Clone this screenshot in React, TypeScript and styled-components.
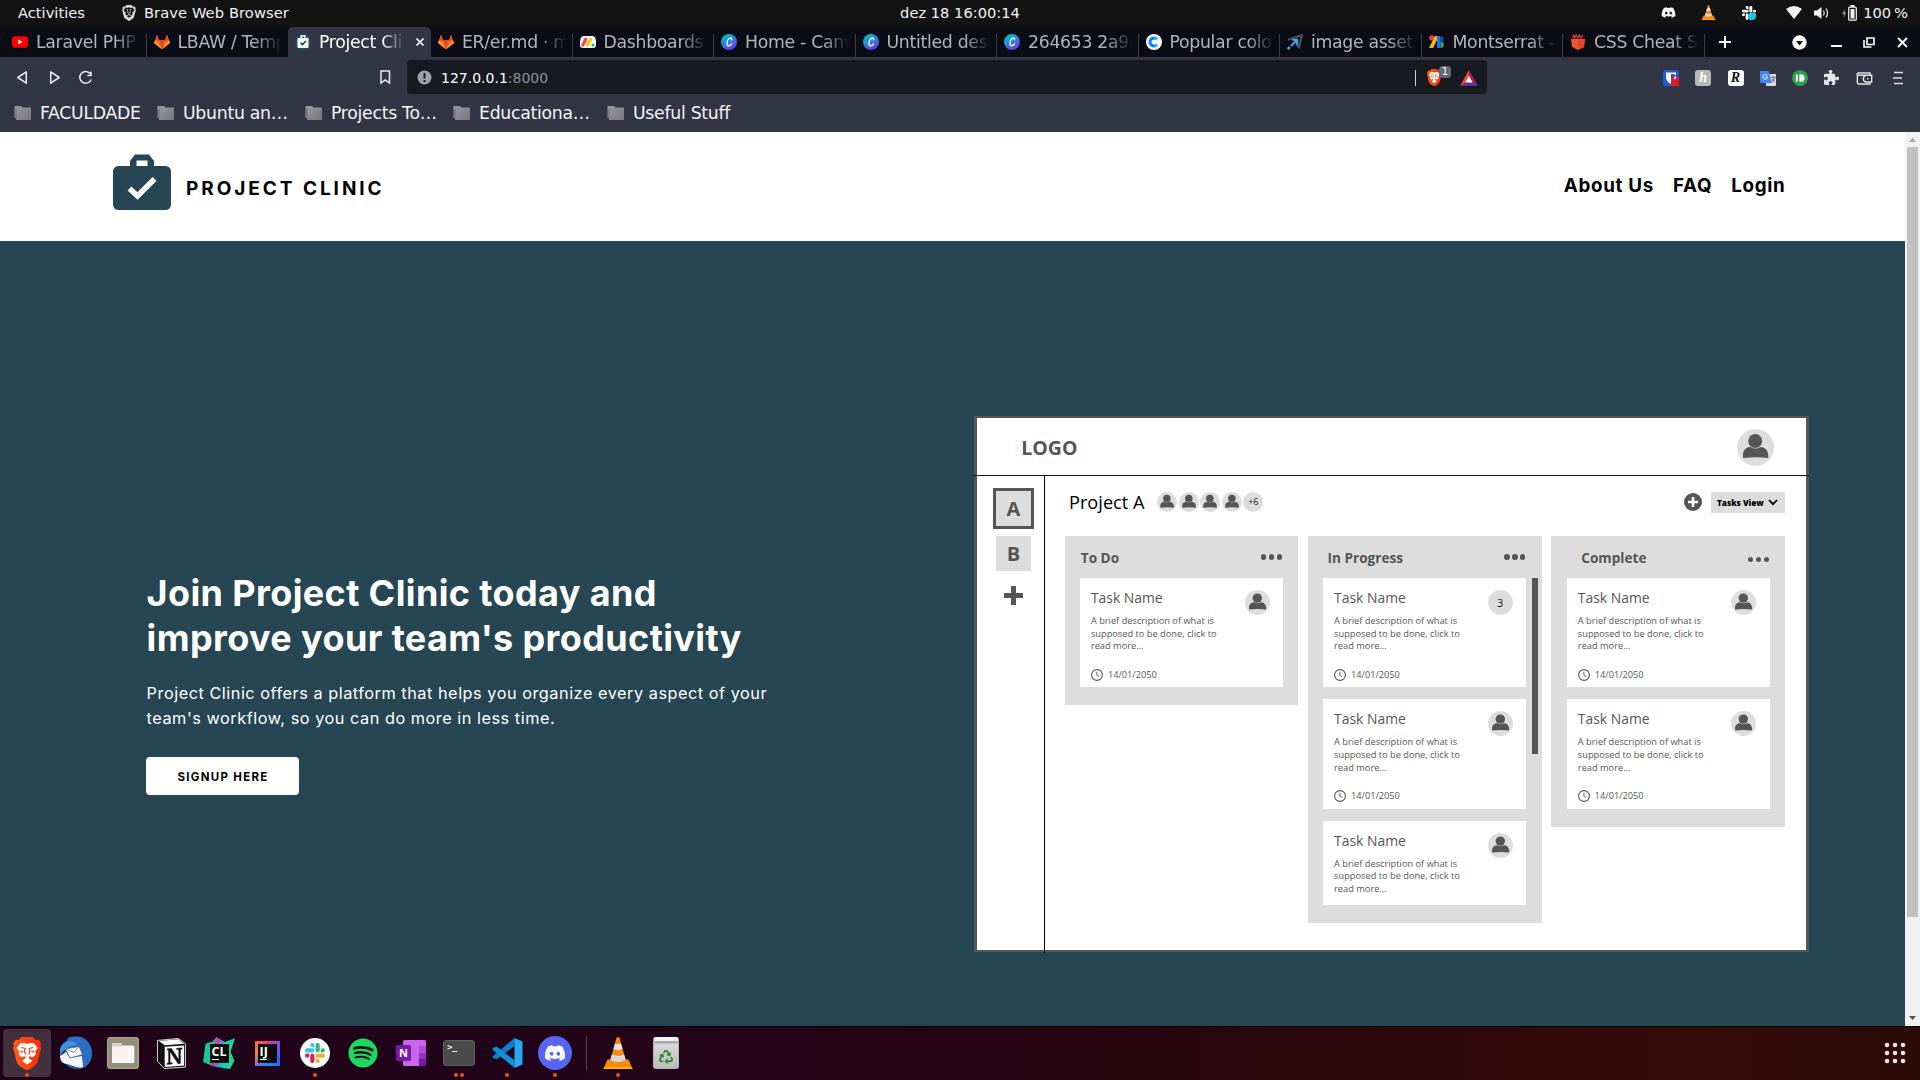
import React from "react";
import styled, { createGlobalStyle, css } from "styled-components";
import { FaBrave, FaDiscord, FaSpotify, FaRecycle, FaPuzzlePiece } from "react-icons/fa6";

const GlobalStyle = createGlobalStyle`
  * { box-sizing: border-box; }
  html, body { margin: 0; padding: 0; overflow: hidden; }
  body { font-family: "DejaVu Sans", sans-serif; }
  h1, p { margin: 0; }
  svg { display: block; flex: none; }
`;

const brandFont = `"Inter", "Liberation Sans", sans-serif`;
const boardFont = `"Open Sans", "Noto Sans", sans-serif`;
const ink = "#555555";
const grey = "#dddddd";
const teal = "#264653";

const Screen = styled.div`
  width: 1920px;
  height: 1080px;
  display: flex;
  flex-direction: column;
  overflow: hidden;
`;

/* ---------- system bar ---------- */
const SystemBar = styled.div`
  height: 27px;
  background: #131313;
  color: #f2f2f2;
  display: grid;
  grid-template-columns: 1fr auto 1fr;
  align-items: center;
  font-size: 14.67px;
  line-height: 25px;
  padding-bottom: 2px;
  white-space: pre;
`;
const SystemLeft = styled.div`
  display: flex;
  align-items: center;
  padding-left: 18px;
`;
const AppLabel = styled.div`
  display: flex;
  align-items: center;
  gap: 7px;
  margin-left: 36px;
  letter-spacing: 0.1px;
`;
const SystemRight = styled.div`
  display: flex;
  align-items: center;
  justify-content: flex-end;
  padding-right: 12px;
`;
const Slot = styled.span<{ $gap?: number }>`
  display: flex;
  margin-left: ${(p) => p.$gap ?? 0}px;
`;

/* ---------- tab strip ---------- */
const TabStrip = styled.div`
  height: 30px;
  background: #0c0c17;
  display: flex;
  padding-left: 5px;
`;
const Tab = styled.div<{ $active?: boolean; $line?: boolean }>`
  width: ${(p) => (p.$active ? 143 : 141.5)}px;
  flex: none;
  display: flex;
  align-items: center;
  padding: 0 6px 0 7px;
  color: ${(p) => (p.$active ? "#ffffff" : "#b4b4b8")};
  background: ${(p) => (p.$active ? "#323544" : "transparent")};
  border-radius: 5px 5px 0 0;
  ${(p) =>
    p.$line &&
    css`
      background: linear-gradient(#3e3e47, #3e3e47) right bottom / 1px 23px no-repeat;
    `}
`;
const TabTitle = styled.span<{ $short?: boolean }>`
  flex: 1;
  min-width: 0;
  margin-left: 8px;
  margin-right: ${(p) => (p.$short ? 8 : -3)}px;
  font-size: 17.3px;
  letter-spacing: -0.3px;
  line-height: 28px;
  white-space: nowrap;
  overflow: hidden;
  mask-image: linear-gradient(90deg, #000 72%, transparent 97%);
`;
const TabActions = styled.div`
  flex: 1;
  display: flex;
  align-items: center;
  padding-left: 13px;
`;

/* ---------- toolbar and bookmarks ---------- */
const Toolbar = styled.div`
  height: 40px;
  background: #323544;
  display: flex;
  align-items: center;
  padding: 1px 13px 0 14px;
`;
const NavButtons = styled.div`
  display: flex;
  align-items: center;
  gap: 14.5px;
  width: 366px;
`;
const AddressBar = styled.div`
  width: 1080px;
  height: 34px;
  margin: -1px 0 0 16px;
  border-radius: 4px;
  background: #171a21;
  display: flex;
  align-items: center;
  padding: 1px 9px 0 10px;
  font-size: 14px;
  color: #ffffff;
`;
const Url = styled.span`
  margin-left: 9px;
  flex: 1;
`;
const Port = styled.span`
  color: #8f9094;
`;
const Divider = styled.div`
  width: 1px;
  height: 16px;
  background: #d0d0d0;
`;
const ShieldBox = styled.div`
  display: flex;
  margin: 0 9px 0 11px;
  position: relative;
  width: 24px;
`;
const CountBadge = styled.span`
  position: absolute;
  left: 12px;
  top: -3px;
  width: 12px;
  height: 12px;
  border-radius: 4px;
  background: #63687a;
  color: #fff;
  font-size: 10px;
  line-height: 12px;
  text-align: center;
`;
const Extensions = styled.div`
  flex: 1;
  display: flex;
  align-items: center;
  justify-content: flex-end;
  gap: 16.3px;
`;
const ExtTile = styled.span<{ $bg: string; $fg: string }>`
  width: 16px;
  height: 16px;
  border-radius: 3px;
  background: ${(p) => p.$bg};
  color: ${(p) => p.$fg};
  font: italic bold 14px/16px "Liberation Serif", serif;
  text-align: center;
`;
const Bookmarks = styled.div`
  height: 35px;
  background: #323544;
  display: flex;
  align-items: flex-start;
  padding: 4px 0 0 14px;
`;
const Bookmark = styled.div<{ $width: number }>`
  width: ${(p) => p.$width}px;
  display: flex;
  align-items: center;
  gap: 8px;
  color: #f4f4f6;
  font-size: 17.3px;
  letter-spacing: -0.28px;
  line-height: 25px;
  white-space: nowrap;
  svg {
    margin-top: -2px;
  }
`;

/* ---------- web page ---------- */
const Viewport = styled.div`
  height: 894px;
  display: flex;
`;
const Page = styled.div`
  width: 1905px;
  display: flex;
  flex-direction: column;
`;
const SiteHeader = styled.header`
  height: 109px;
  background: #ffffff;
  display: flex;
  justify-content: space-between;
  padding: 22px 119.5px 0 112px;
  font-family: ${brandFont};
  color: #000;
`;
const Brand = styled.div`
  display: flex;
  align-items: flex-start;
`;
const BrandName = styled.span`
  margin: 21px 0 0 14px;
  font-size: 19px;
  font-weight: 700;
  line-height: 27px;
  letter-spacing: 2.95px;
  white-space: nowrap;
`;
const SiteNav = styled.nav`
  display: flex;
  gap: 19px;
  padding-top: 18px;
  font-size: 18.8px;
  font-weight: 700;
  line-height: 27px;
  letter-spacing: 0.7px;
`;
const Hero = styled.main`
  flex: 1;
  background: ${teal};
  display: flex;
  align-items: flex-start;
`;
const Pitch = styled.section`
  width: 828px;
  margin: 330px 0 0 146px;
  font-family: ${brandFont};
  color: #ffffff;
`;
const Title = styled.h1`
  font-size: 36px;
  font-weight: 700;
  line-height: 45px;
  letter-spacing: 0.38px;
  padding-left: 0.6px;
  white-space: nowrap;
`;
const Lead = styled.p`
  margin-top: 20px;
  padding-left: 0.6px;
  font-size: 16.3px;
  font-weight: 400;
  line-height: 25px;
  letter-spacing: 0.52px;
  white-space: nowrap;
`;
const SignupButton = styled.button`
  display: block;
  margin: 26px 0 0;
  width: 153px;
  height: 38px;
  padding: 2px 0 0 1px;
  border: 0;
  border-radius: 4px;
  background: #ffffff;
  color: #000;
  font: 700 11.5px/20px ${brandFont};
  letter-spacing: 1.3px;
`;

/* ---------- board preview ---------- */
const Board = styled.section`
  width: 835px;
  height: 536px;
  margin-top: 175px;
  background: #fff;
  border: solid #555;
  border-width: 2.5px 3px;
  color: ${ink};
  font-family: ${boardFont};
  display: flex;
  flex-direction: column;
`;
const BoardTop = styled.div`
  height: 58px;
  margin: 0 -3px;
  border-bottom: 1px solid #111;
  display: flex;
  align-items: center;
  justify-content: space-between;
  padding: 2px 35px 0 47.3px;
  flex: none;
`;
const BoardLogo = styled.span`
  font-size: 19.5px;
  font-weight: 700;
`;
const BoardBody = styled.div`
  flex: 1;
  display: flex;
  margin-bottom: -3px;
`;
const Rail = styled.div`
  width: 68px;
  border-right: 1px solid #000;
  display: flex;
  flex-direction: column;
  align-items: center;
  padding: 12px 0 0 6px;
`;
const RailTile = styled.div<{ $active?: boolean }>`
  width: ${(p) => (p.$active ? 41 : 35)}px;
  height: ${(p) => (p.$active ? 41 : 35)}px;
  margin-bottom: ${(p) => (p.$active ? 7 : 15)}px;
  background: ${grey};
  border: ${(p) => (p.$active ? `3px solid ${ink}` : "0")};
  font-size: 20px;
  font-weight: 700;
  line-height: 35px;
  text-align: center;
`;
const Workspace = styled.div`
  flex: 1;
  padding-left: 20px;
`;
const ProjectBar = styled.div`
  height: 60px;
  width: 720px;
  display: flex;
  align-items: flex-start;
  padding: 16px 0 0 4px;
`;
const ProjectName = styled.span`
  width: 88px;
  color: #000;
  font-size: 18.2px;
  line-height: 21px;
  white-space: nowrap;
`;
const Members = styled.div`
  display: flex;
  flex: 1;
  gap: 1.6px;
`;
const Bubble = styled.span<{ $size: number; $font: number }>`
  width: ${(p) => p.$size}px;
  height: ${(p) => p.$size}px;
  line-height: ${(p) => p.$size}px;
  font-size: ${(p) => p.$font}px;
  border-radius: 50%;
  background: ${grey};
  color: #111;
  text-align: center;
  flex: none;
`;
const ViewSelect = styled.div`
  width: 74px;
  height: 20.5px;
  margin-left: 9px;
  padding: 0 7px 0 6px;
  background: ${grey};
  color: #000;
  font-size: 8.2px;
  font-weight: 800;
  display: flex;
  align-items: center;
  justify-content: space-between;
  white-space: nowrap;
`;
const Columns = styled.div`
  display: flex;
  align-items: flex-start;
  gap: 9.8px;
`;
const Column = styled.div<{ $height: number; $inset?: number }>`
  width: 233.4px;
  height: ${(p) => p.$height}px;
  background: ${grey};
  padding-left: ${(p) => p.$inset ?? 15.3}px;
`;
const ColumnHead = styled.div<{ $indent: number }>`
  width: 203px;
  height: 42.2px;
  padding: 0 1px 0 ${(p) => p.$indent}px;
  display: flex;
  align-items: center;
  justify-content: space-between;
  font-size: 13.6px;
  font-weight: 700;
`;
const MenuDots = styled.span<{ $drop?: number }>`
  display: flex;
  gap: 2.6px;
  padding-top: ${(p) => p.$drop ?? 0}px;
  &::before,
  &::after {
    content: "";
  }
  &::before,
  &::after,
  i {
    width: 5.4px;
    height: 5.4px;
    border-radius: 50%;
    background: ${ink};
  }
`;
const ColumnBody = styled.div`
  display: flex;
  gap: 6px;
`;
const Stack = styled.div`
  display: flex;
  flex-direction: column;
  gap: 12px;
`;
const ScrollTrack = styled.div`
  width: 6px;
  height: 176px;
  background: ${ink};
`;
const Card = styled.article<{ $height: number }>`
  width: 202.6px;
  height: ${(p) => p.$height}px;
  background: #fff;
  padding: 10px 13.4px 0 10.6px;
  display: flex;
  justify-content: space-between;
`;
const CardBody = styled.div`
  display: flex;
  flex-direction: column;
  white-space: pre;
`;
const CardTitle = styled.span`
  font-size: 13.9px;
  line-height: 20px;
`;
const CardText = styled.p`
  margin-top: 7px;
  font-size: 9.25px;
  line-height: 12.6px;
`;
const CardDate = styled.span`
  margin-top: 14.8px;
  display: flex;
  align-items: center;
  gap: 5px;
  font-size: 9.2px;
  line-height: 14px;
`;
const CardOwner = styled.div`
  padding-top: 2px;
`;

/* ---------- page scrollbar ---------- */
const Scrollbar = styled.div`
  width: 15px;
  background: #f1f1f1;
  display: flex;
  flex-direction: column;
  align-items: center;
`;
const Thumb = styled.div`
  width: 11px;
  height: 770px;
  background: #c1c1c1;
  margin-bottom: auto;
`;

/* ---------- dock ---------- */
const Dock = styled.footer`
  height: 54px;
  border-top: 1px solid #0a0307;
  background: linear-gradient(90deg, #1f0419 0%, #22041a 28%, #29050f 60%, #350b07 88%, #2c0a08 100%);
  display: flex;
  align-items: center;
  padding: 0 9px 1px 3px;
`;
const DockItem = styled.div<{ $active?: boolean }>`
  width: 48px;
  height: 48px;
  border-radius: 4px;
  background: ${(p) => (p.$active ? "#43303f" : "transparent")};
  display: flex;
  align-items: center;
  justify-content: center;
  position: relative;
  flex: none;
`;
const Running = styled.span`
  position: absolute;
  left: 0;
  right: 0;
  bottom: 0;
  display: flex;
  justify-content: center;
  gap: 2.5px;
  i {
    width: 4px;
    height: 4px;
    border-radius: 50%;
    background: #e95420;
  }
`;
const DockLine = styled.div`
  width: 1px;
  height: 34px;
  margin: 0 7px;
  background: #5a4350;
`;
const DockSpacer = styled.div`
  flex: 1;
`;
const RoundLogo = styled.span<{ $bg: string; $size: number; $fg?: string }>`
  width: ${(p) => p.$size}px;
  height: ${(p) => p.$size}px;
  border-radius: 50%;
  background: ${(p) => p.$bg};
  color: ${(p) => p.$fg ?? "#fff"};
  display: flex;
  align-items: center;
  justify-content: center;
`;

/* ---------- icons ---------- */
const Person = ({ size }: { size: number }) => (
  <svg width={size} height={size} viewBox="0 0 37 37">
    <circle cx="18.5" cy="18.5" r="18.5" fill={grey} />
    <circle cx="18.2" cy="12" r="7" fill={ink} />
    <path d="M6 29 V25.5 C6 20.5 10 18 13.5 18 Q18.5 21 23.5 18 C27.5 18 31.2 21 31.2 26 V29 Q18.5 27.6 6 29Z" fill={ink} />
  </svg>
);
const ClockIcon = () => (
  <svg width="12" height="12" viewBox="0 0 12 12" fill="none" stroke={ink}>
    <circle cx="6" cy="6" r="5.4" strokeWidth="1.1" />
    <path d="M5.9 2.8V6.3L8.2 7.6" strokeWidth="0.9" />
  </svg>
);
const Folder = () => (
  <svg width="18" height="14" viewBox="0 0 18 14">
    <defs>
      <linearGradient id="fold" x1="0" y1="0" x2="1" y2="1">
        <stop offset="0" stopColor="#9a9aa2" />
        <stop offset="1" stopColor="#77777a" />
      </linearGradient>
    </defs>
    <path d="M1 0H7L8.5 1.5H17V14H2V12H0.5V1Z" fill="url(#fold)" />
    <path d="M2 3V13" stroke="#55555e" strokeWidth=".6" />
  </svg>
);
const YoutubeMark = () => (
  <svg width="16" height="16" viewBox="0 0 16 16">
    <rect x="0" y="2.2" width="16" height="11.6" rx="3" fill="#ff0000" />
    <path d="M6.3 5.5L10.6 8L6.3 10.5Z" fill="#fff" />
  </svg>
);
const GitlabMark = () => (
  <svg width="16" height="16" viewBox="0 0 16 16">
    <path d="M0 9L3 .8L5.2 6.2H10.8L13 .8L16 9L8 15.2Z" fill="#fc6d26" />
    <path d="M5.2 6.2H10.8L8 15.2Z" fill="#e24329" />
    <path d="M0 9L1.1 6.2L8 15.2ZM16 9L14.9 6.2L8 15.2Z" fill="#fca326" />
    <path d="M3 .8L5.2 6.2H1ZM13 .8L10.8 6.2H15Z" fill="#e24329" />
  </svg>
);
const Cone = ({ size }: { size: number }) => (
  <svg width={size} height={size} viewBox="0 0 32 32">
    <path d="M5.5 22.5H26.5L30.5 32H1.5Z" fill="#f78c00" />
    <path d="M1.9 30.5H30.1L30.5 32H1.5Z" fill="#ffb330" />
    <path d="M14.6 0.5Q16 -.5 17.4 .5L24.5 26Q16 31 7.5 26Z" fill="#f58a0c" />
    <path d="M13 6.5Q16 7.7 19 6.5L20.6 12Q16 14 11.4 12Z" fill="#e4e4e4" />
    <path d="M9.8 17.6Q16 20.4 22.2 17.6L23.7 23Q16 27 8.3 23Z" fill="#dadada" />
  </svg>
);
const SlackMark = ({ size, mono }: { size: number; mono?: boolean }) => {
  const c = mono ? ["#fff", "#fff", "#fff", "#fff"] : ["#36c5f0", "#2eb67d", "#ecb22e", "#e01e5a"];
  return (
    <svg width={size} height={size} viewBox="0 0 24 24">
      {c.map((fill, i) => (
        <g key={i} fill={fill} transform={`rotate(${i * 90} 12 12)`}>
          <rect x="0" y="6.3" width="11.3" height="5" rx="2.5" />
          <path d="M11.3 5H8.8A2.5 2.5 0 1 1 11.3 2.5Z" />
        </g>
      ))}
      {mono && <circle cx="17.5" cy="17.5" r="6.5" fill="#12c8ee" />}
    </svg>
  );
};
const ClinicMark = () => (
  <svg width="60" height="57" viewBox="0 0 60 57">
    <path d="M18 13V7L23 .5H37L42 7V13" fill={teal} />
    <path d="M24.5 6.5H35.5V12.5H24.5Z" fill="#fff" />
    <rect x="1" y="12" width="58" height="44" rx="5.5" fill={teal} />
    <path d="M17.5 34.5L25.5 42L42.5 25" fill="none" stroke="#fff" strokeWidth="5.4" />
  </svg>
);
const ClinicFavicon = () => (
  <svg width="16" height="16" viewBox="0 0 16 16">
    <circle cx="8" cy="8" r="8" fill="#244e5c" />
    <path d="M6 4V2H10V4" fill="none" stroke="#fff" strokeWidth="1.3" />
    <rect x="2.5" y="4" width="11" height="10" rx="1.2" fill="#fff" />
    <path d="M5.5 8.8L7.4 10.7L10.8 7" fill="none" stroke="#17333d" strokeWidth="1.5" />
  </svg>
);
const MondayMark = () => (
  <svg width="16" height="16" viewBox="0 0 16 16">
    <path d="M4 2H12C15 2 16 5 16 8V11C16 13 15 14 13 14H3C1 14 0 13 0 11V9C0 5 1 2 4 2Z" fill="#fff" />
    <g strokeWidth="3.2" strokeLinecap="round">
      <path d="M2.8 11L5.8 5.2" stroke="#ff3d57" />
      <path d="M7.5 11L10.5 5.2" stroke="#ffcb00" />
      <path d="M13 11V11.1" stroke="#00ca72" />
    </g>
  </svg>
);
const CanvaMark = ({ id }: { id: string }) => (
  <svg width="16" height="16" viewBox="0 0 16 16">
    <defs>
      <linearGradient id={id} x1="0.2" y1="0" x2="0.8" y2="1">
        <stop offset="0" stopColor="#00c4cc" />
        <stop offset=".5" stopColor="#2f80d8" />
        <stop offset="1" stopColor="#7d2ae8" />
      </linearGradient>
    </defs>
    <circle cx="8" cy="8" r="8" fill={`url(#${id})`} />
    <path d="M10.6 5.8C11 4 9.3 3.4 7.8 4.8C5.8 6.6 5 11.6 7.6 11.8C9 11.9 10 10.9 10.5 9.8" fill="none" stroke="#fff" strokeWidth="1.3" strokeLinecap="round" />
  </svg>
);
const CoolorsMark = () => (
  <svg width="16" height="16" viewBox="0 0 16 16">
    <circle cx="8" cy="8" r="8" fill="#fff" />
    <path d="M10.9 5.2A4 4 0 1 0 10.9 10.8" fill="none" stroke="#0a7cff" strokeWidth="3" />
    <path d="M10.9 5.2A4 4 0 0 0 8.5 4M8.5 12A4 4 0 0 0 10.9 10.8" fill="none" stroke="#35b7ff" strokeWidth="3" />
  </svg>
);
const PlaneMark = () => (
  <svg width="16" height="16" viewBox="0 0 16 16">
    <path d="M1 5.8L14.8 1.2L12 13L9.2 10.2" fill="none" stroke="#4c5054" strokeWidth="2.2" />
    <path d="M.8 15.2L2.8 12.9" stroke="#45a6f0" strokeWidth="2.4" />
    <path d="M4 12L9.5 6.5M5.2 5.8H10.2V10.8" fill="none" stroke="#45a6f0" strokeWidth="2" />
  </svg>
);
const FontsMark = () => (
  <svg width="16" height="14" viewBox="0 0 16 14">
    <circle cx="3" cy="3" r="2.8" fill="#ea4335" />
    <path d="M6 1H10L4 13H0Z" fill="#fbbc04" />
    <path d="M8 1H11.5V13H8Z" fill="#1a73e8" />
    <path d="M11.5 1A3 3 0 0 1 11.5 7Z" fill="#0d4fb0" />
    <path d="M11.5 6.5A3.2 3.2 0 0 1 11.5 13Z" fill="#34a853" />
  </svg>
);
const CheatMark = () => (
  <svg width="16" height="16" viewBox="0 0 16 16">
    <path d="M1 5H15L14 13L8 16L2 13Z" fill="#f2552c" />
    <path d="M8 5H15L14 13L8 16Z" fill="#e34a22" />
    <path d="M2.5 4L3.5 1.5L4.5 4L6 1L8 4L9.5 1L11 4L13 .8" fill="none" stroke="#c8402a" strokeWidth="1.3" />
  </svg>
);

const ChromeGlyph = ({ d }: { d: string }) => (
  <svg width="17" height="17" viewBox="0 0 18 18" fill="none" stroke="#ececf0" strokeWidth="1.6" strokeLinejoin="round">
    <path d={d} />
  </svg>
);

const tabs = [
  { title: "Laravel PHP", icon: <YoutubeMark />, line: true },
  { title: "LBAW / Temp", icon: <GitlabMark /> },
  { title: "Project Cli", icon: <ClinicFavicon />, active: true },
  { title: "ER/er.md · m", icon: <GitlabMark />, line: true },
  { title: "Dashboards", icon: <MondayMark />, line: true },
  { title: "Home - Canv", icon: <CanvaMark id="cv1" />, line: true },
  { title: "Untitled desi", icon: <CanvaMark id="cv2" />, line: true },
  { title: "264653 2a9d", icon: <CanvaMark id="cv3" />, line: true },
  { title: "Popular colo", icon: <CoolorsMark />, line: true },
  { title: "image asset", icon: <PlaneMark />, line: true },
  { title: "Montserrat -", icon: <FontsMark />, line: true },
  { title: "CSS Cheat S", icon: <CheatMark />, line: true },
];

const bookmarks = [
  { label: "FACULDADE", width: 143 },
  { label: "Ubuntu an…", width: 148 },
  { label: "Projects To…", width: 148 },
  { label: "Educationa…", width: 154 },
  { label: "Useful Stuff", width: 150 },
];

const TaskCard = ({ height = 109.2, count, dated = true }: { height?: number; count?: number; dated?: boolean }) => (
  <Card $height={height}>
    <CardBody>
      <CardTitle>Task Name</CardTitle>
      <CardText>{"A brief description of what is\nsupposed to be done, click to\nread more..."}</CardText>
      {dated && (
        <CardDate>
          <ClockIcon />
          14/01/2050
        </CardDate>
      )}
    </CardBody>
    <CardOwner>
      {count ? (
        <Bubble as="div" $size={25} $font={11}>
          {count}
        </Bubble>
      ) : (
        <Person size={25} />
      )}
    </CardOwner>
  </Card>
);

const Dots = ({ drop }: { drop?: number }) => (
  <MenuDots $drop={drop}>
    <i />
  </MenuDots>
);

const BraveLion = ({ size }: { size: number }) => (
  <svg width={size * 0.86} height={size} viewBox="0 0 28 33">
    <defs>
      <linearGradient id="lion" x1="0" y1="0" x2="1" y2="0">
        <stop offset="0" stopColor="#ff5a1e" />
        <stop offset="1" stopColor="#ff2a00" />
      </linearGradient>
    </defs>
    <path d="M8.5 0H19.5L22.5 3L25.5 2.8L28 6.5L27.3 9L28 11L24.3 25.5C23.5 28.5 17 32 14 33.5C11 32 4.5 28.5 3.7 25.5L0 11L.7 9L0 6.5L2.5 2.8L5.5 3Z" fill="url(#lion)" />
    <path d="M14 6.8L18 6L21 6.5L24.5 11L22 14.5L22.7 17L20 20.2L16.5 19.3L15.2 21L19.2 23.8L14 27.8L8.8 23.8L12.8 21L11.5 19.3L8 20.2L5.3 17L6 14.5L3.5 11L7 6.5L10 6Z" fill="#fff" />
    <path d="M8 10.5L12 11.5L11.2 14L12.3 17.5M20 10.5L16 11.5L16.8 14L15.7 17.5" fill="none" stroke="#ff4010" strokeWidth="1.2" />
    <path d="M6.8 13L10.5 14.8L8 16ZM21.2 13L17.5 14.8L20 16Z" fill="#ff4010" />
  </svg>
);

const NotionCube = () => (
  <svg width="31" height="33" viewBox="0 0 32 34">
    <path d="M1.5 3.5L23 1.5L30.5 7V31L8.5 32.5L1.5 25Z" fill="#111" stroke="#ddd" strokeWidth="1" />
    <path d="M3 4L23 2.3L29 7L9 8.5Z" fill="#fff" />
    <path d="M9 10L29 8.7V29.5L9 31Z" fill="#fff" />
    <path d="M11.5 12.2L16 11.9L23.5 23.5V13.2L21.3 12.7V11.6L27 11.2V12.3L25.2 13V27.3L22.8 27.7L14.5 15V26.3L16.8 26.8V27.9L11.3 28.3V27.2L13 26.5V13.8L11.5 13.2Z" fill="#111" stroke="#111" strokeWidth=".5" />
  </svg>
);
const Thunderbird = () => (
  <svg width="35" height="34" viewBox="0 0 35 34">
    <path d="M15 2C24 -3 34.5 6 34 18C33.5 28 26 34 17 33C10 32.5 6 27 5 22L8 8Z" fill="#2059a8" />
    <path d="M11 1.5C24 -3 35 8 34 19C33 29 25 33.5 20 32.5C27 26 27 15 20 9L9 8C8 5 9 3 11 1.5Z" fill="#2a6fc4" />
    <path d="M2 13C4 7 8 4 14 5C17 6 19 7 20 9L8 12L2 20Z" fill="#3f8fe0" />
    <path d="M2 20L8 16L12 22L24 20L25 31C19 33 14 29 9 28C5 28 2 25 2 20Z" fill="#f5f7fb" />
    <path d="M7.5 13L21 10.5L24.5 18.5L12 22Z" fill="#fff" stroke="#6c7684" strokeWidth=".9" />
    <path d="M7.5 13L16 16.5L21 10.5" fill="none" stroke="#6c7684" strokeWidth=".9" />
  </svg>
);
const FilesIcon = () => (
  <svg width="32" height="32" viewBox="0 0 32 32">
    <rect width="32" height="32" rx="3.5" fill="#b0aa99" />
    <rect x="1" y="1" width="30" height="30" rx="3" fill="#958f7e" />
    <path d="M5 7Q5 6 6 6H14L15.5 8.5H26Q27.3 8.5 27.3 10V24.5Q27.3 26 26 26H6.3Q5 26 5 24.5Z" fill="#f7f5f2" />
    <path d="M5 7Q5 6 6 6H14L15.5 8.5V9.8H5Z" fill="#d9d4c8" />
  </svg>
);
const IdeText = styled.span`
  display: flex;
  flex-direction: column;
  align-items: flex-start;
  width: 19px;
  height: 19px;
  padding: 3px 0 0 2px;
  background: #0a0a0a;
  color: #fff;
  font: bold 12.5px/9px "Open Sans", sans-serif;
  &::after {
    content: "";
    width: 7px;
    height: 1.5px;
    margin-top: 3px;
    background: #fff;
    flex: none;
  }
`;
const IdeFrame = styled.span<{ $kind: "clion" | "idea" }>`
  display: flex;
  align-items: center;
  justify-content: center;
  ${(p) =>
    p.$kind === "clion"
      ? css`
          width: 32px;
          height: 32px;
          background: linear-gradient(100deg, #16c79a 0 30%, #e8388a 38%, #8a5fc8 46%, #13c8b8 60%, #1fe08c);
          clip-path: polygon(8% 20%, 30% 14%, 42% 0, 68% 16%, 100% 4%, 86% 46%, 98% 74%, 84% 100%, 34% 92%, 0 78%);
        `
      : css`
          width: 25px;
          height: 25px;
          background: conic-gradient(from 0deg, #e8388a, #7b52d8 15%, #1b6cff 35%, #1b8cff 50%, #8a6cc0 62%, #f08a2a 75%, #fc3a6b);
        `}
`;
const OneNote = styled.span`
  width: 23.4px;
  height: 26px;
  margin-left: 7px;
  border-radius: 1.5px;
  background: linear-gradient(90deg, #ca64ea 0 70%, transparent 70%),
    linear-gradient(#ca64ea 0 25%, #ae4bd5 25% 50%, #9332bf 50% 75%, #7719aa 75%);
`;
const NoteTile = styled.span`
  display: block;
  width: 15.5px;
  height: 15.5px;
  margin: 5px 0 0 -7px;
  border-radius: 1.5px;
  background: #7719aa;
  color: #fff;
  font: bold 11px/15px "Open Sans", sans-serif;
  text-align: center;
`;
const TerminalTile = styled.span`
  width: 32px;
  height: 26px;
  border-radius: 3px;
  border: 1px solid #5f5f5f;
  background: #4a4a4a;
  color: #f5f5f5;
  font: bold 9px/12px "DejaVu Sans Mono", monospace;
  padding: 0 0 0 3px;
  letter-spacing: -0.4px;
`;
const VsCode = () => (
  <svg width="31" height="30" viewBox="0 0 31 30">
    <path d="M22.5 0V8L4.5 21.5L1 20Q0 19 1 18Z" fill="#0c7ec8" />
    <path d="M22.5 30V22L4.5 8.5L1 10Q0 11 1 12Z" fill="#0e90dc" />
    <path d="M22.5 0L30.5 3.5V26.5L22.5 30Z" fill="#2aa6f2" />
  </svg>
);
const TrashIcon = styled.span`
  width: 26px;
  height: 32px;
  border-radius: 3px;
  border: 1px solid #b5b5b5;
  border-top: 4px solid #f2f2f2;
  background: linear-gradient(#a9a9a9 0 2px, #d8d8d8 3px, #bcbcbc);
  color: #2f8a26;
  display: flex;
  align-items: center;
  justify-content: center;
  padding-top: 5px;
`;

export default function App() {
  return (
    <Screen>
      <GlobalStyle />
      <SystemBar>
        <SystemLeft>
          Activities
          <AppLabel>
            <FaBrave size={16} color="#d9d9d9" />
            Brave Web Browser
          </AppLabel>
        </SystemLeft>
        <span>dez 18 16:00:14</span>
        <SystemRight>
          <FaDiscord size={15} />
          <Slot $gap={25}><Cone size={15} /></Slot>
          <Slot $gap={26}><SlackMark size={14} mono /></Slot>
          <Slot $gap={30}>
            <svg width="16" height="13" viewBox="0 0 16 13"><path d="M0 3Q8 -3 16 3L8 13Z" fill="#f2f2f2" /></svg>
          </Slot>
          <Slot $gap={12}>
            <svg width="16" height="14" viewBox="0 0 16 14" fill="none" stroke="#f2f2f2">
              <path d="M0 4.5H3L7.5 1V13L3 9.5H0Z" fill="#f2f2f2" stroke="none" />
              <path d="M9.5 4.5Q11 7 9.5 9.5M12 2.5Q15 7 12 11.5" strokeWidth="1.2" />
            </svg>
          </Slot>
          <Slot $gap={12}>
            <svg width="15" height="16" viewBox="0 0 15 16">
              <path d="M3 4L0 9H2L1.5 13L4 7.5H2.5Z" fill="#999" />
              <rect x="6.7" y="2.2" width="7.6" height="13" rx="1" fill="none" stroke="#f2f2f2" strokeWidth="1.2" />
              <rect x="8.5" y="4" width="4" height="9.5" fill="#f2f2f2" />
              <rect x="8.5" y="0" width="4" height="2" fill="#f2f2f2" />
            </svg>
          </Slot>
          <Slot $gap={6}>{"100\u202f%"}</Slot>
        </SystemRight>
      </SystemBar>

      <TabStrip>
        {tabs.map((t) => (
          <Tab key={t.title} $active={t.active} $line={t.line}>
            {t.icon}
            <TabTitle $short={t.active}>{t.title}</TabTitle>
            {t.active && (
              <svg width="10" height="10" viewBox="0 0 10 10" stroke="#fff" strokeWidth="1.7"><path d="M1.5 1.5L8.5 8.5M8.5 1.5L1.5 8.5" /></svg>
            )}
          </Tab>
        ))}
        <TabActions>
          <svg width="14" height="14" viewBox="0 0 14 14" stroke="#fff" strokeWidth="2"><path d="M1 7H13M7 1V13" /></svg>
          <Slot $gap={60}>
            <svg width="15" height="15" viewBox="0 0 15 15"><circle cx="7.5" cy="7.5" r="7.2" fill="#fff" /><path d="M4 6H11L7.5 10.5Z" fill="#0c0c17" /></svg>
          </Slot>
          <Slot $gap={24}>
            <svg width="11" height="10" viewBox="0 0 11 10"><rect y="8" width="11" height="2" fill="#fff" /></svg>
          </Slot>
          <Slot $gap={21}>
            <svg width="12" height="11" viewBox="0 0 12 11" fill="none" stroke="#fff" strokeWidth="1.6"><path d="M4 1H11V7.5H4ZM1 3V10H8.5" /></svg>
          </Slot>
          <Slot $gap={22}>
            <svg width="11" height="11" viewBox="0 0 11 11" stroke="#fff" strokeWidth="1.9"><path d="M1 1L10 10M10 1L1 10" /></svg>
          </Slot>
        </TabActions>
      </TabStrip>

      <Toolbar>
        <NavButtons>
          <ChromeGlyph d="M13 3V15L4 9Z" />
          <ChromeGlyph d="M5 3V15L14 9Z" />
          <ChromeGlyph d="M14 5A6.2 6.2 0 1 0 15 11M14.8 3V7H11" />
        </NavButtons>
        <svg width="11" height="15" viewBox="0 0 11 15" fill="none" stroke="#ececf0" strokeWidth="1.5"><path d="M1 1H9.5V13L5.2 10L1 13Z" /></svg>
        <AddressBar>
          <svg width="15" height="15" viewBox="0 0 15 15"><circle cx="7.5" cy="7.5" r="7" fill="#9ea1a8" /><path d="M7.5 3V8.5M7.5 10V12" stroke="#171a21" strokeWidth="2" /></svg>
          <Url>127.0.0.1<Port>:8000</Port></Url>
          <Divider />
          <ShieldBox>
            <BraveLion size={17} />
            <CountBadge>1</CountBadge>
          </ShieldBox>
          <svg width="18" height="16" viewBox="0 0 18 16"><path d="M9 0L0 16L9 11Z" fill="#ff4724" /><path d="M9 0L18 16L9 11Z" fill="#9e1f63" /><path d="M0 16H18L9 10Z" fill="#662d91" /><path d="M9 6L5.3 12.6H12.7Z" fill="#fff" /></svg>
        </AddressBar>
        <Extensions>
          <svg width="16" height="16" viewBox="0 0 16 16"><rect width="16" height="16" rx="2" fill="#175ddc" /><path d="M3 2.5H13V8C13 11 8 14 8 14S3 11 3 8Z" fill="#fff" /><path d="M8 4H11.5V8L8 11.5Z" fill="#175ddc" /><rect x="8" y="9" width="8" height="7" fill="#e01b24" /><path d="M10 9V7.5A2 2 0 0 1 14 7.5V9" fill="none" stroke="#e01b24" strokeWidth="1.4" /></svg>
          <ExtTile $bg="#b9b9b9" $fg="#fff">h</ExtTile>
          <ExtTile $bg="#fff" $fg="#111">R</ExtTile>
          <svg width="16" height="16" viewBox="0 0 16 16"><rect x="6" y="4" width="10" height="12" rx="1" fill="#d5d8dc" /><path d="M0 1H8.5L12 13H1Q0 13 0 12Z" fill="#4285f4" /><path d="M7.2 5.5A2.3 2.3 0 1 0 7.6 7.2H5.5" fill="none" stroke="#fff" strokeWidth="1" /><path d="M11 7.5H15.5M13.2 6.3V7.5M14.8 7.5Q14 10 11.8 11.5M12 9L14.8 12" fill="none" stroke="#5f6368" strokeWidth=".9" /></svg>
          <svg width="16" height="16" viewBox="0 0 16 16"><circle cx="8" cy="8" r="8" fill="#2aa04a" /><path d="M4.8 4.5V11.5" stroke="#fff" strokeWidth="2" /><path d="M8.2 5.2H9A2.8 2.8 0 0 1 9 10.8H8.2Z" fill="#fff" stroke="#fff" strokeWidth="1.7" /></svg>
          <FaPuzzlePiece size={15} color="#e6e6ea" />
          <svg width="17" height="14" viewBox="0 0 17 14" fill="none" stroke="#e0e0e6" strokeWidth="1.4"><path d="M14 4V2H2.5A1.3 1.3 0 0 0 1.3 4V11.5Q1.3 13 3 13H14V11M2 4.3H15.7V11H10A3.3 3.3 0 0 1 10 4.5M11 7.7H12.5" /></svg>
          <svg width="18" height="14" viewBox="0 0 18 14" stroke="#e0e0e6" strokeWidth="1.6"><path d="M5 1.5H14M4 7H13M5 12.5H14" /></svg>
        </Extensions>
      </Toolbar>

      <Bookmarks>
        {bookmarks.map((b) => (
          <Bookmark key={b.label} $width={b.width}>
            <Folder />
            {b.label}
          </Bookmark>
        ))}
      </Bookmarks>

      <Viewport>
        <Page>
          <SiteHeader>
            <Brand>
              <ClinicMark />
              <BrandName>PROJECT CLINIC</BrandName>
            </Brand>
            <SiteNav>
              <span>About Us</span>
              <span>FAQ</span>
              <span>Login</span>
            </SiteNav>
          </SiteHeader>
          <Hero>
            <Pitch>
              <Title>
                Join Project Clinic today and
                <br />
                improve your team's productivity
              </Title>
              <Lead>
                Project Clinic offers a platform that helps you organize every aspect of your
                <br />
                team's workflow, so you can do more in less time.
              </Lead>
              <SignupButton>SIGNUP HERE</SignupButton>
            </Pitch>
            <Board>
              <BoardTop>
                <BoardLogo>LOGO</BoardLogo>
                <Person size={37} />
              </BoardTop>
              <BoardBody>
                <Rail>
                  <RailTile $active>A</RailTile>
                  <RailTile>B</RailTile>
                  <svg width="19" height="19" viewBox="0 0 19 19"><path d="M0 9.5H19M9.5 0V19" stroke={ink} strokeWidth="5" /></svg>
                </Rail>
                <Workspace>
                  <ProjectBar>
                    <ProjectName>Project A</ProjectName>
                    <Members>
                      <Person size={20} />
                      <Person size={20} />
                      <Person size={20} />
                      <Person size={20} />
                      <Bubble $size={20} $font={9}>+6</Bubble>
                    </Members>
                    <svg width="18" height="20" viewBox="0 0 18 20"><circle cx="9" cy="10" r="9" fill={ink} /><path d="M4 10H14M9 5V15" stroke="#fff" strokeWidth="2.6" /></svg>
                    <ViewSelect>
                      Tasks View
                      <svg width="10" height="7" viewBox="0 0 10 7" fill="none" stroke="#000" strokeWidth="1.8"><path d="M1 1L5 5.2L9 1" /></svg>
                    </ViewSelect>
                  </ProjectBar>
                  <Columns>
                    <Column $height={169}>
                      <ColumnHead $indent={0.5}>To Do<Dots /></ColumnHead>
                      <TaskCard />
                    </Column>
                    <Column $height={387}>
                      <ColumnHead $indent={4}>In Progress<Dots /></ColumnHead>
                      <ColumnBody>
                        <Stack>
                          <TaskCard count={3} />
                          <TaskCard />
                          <TaskCard height={84.5} dated={false} />
                        </Stack>
                        <ScrollTrack />
                      </ColumnBody>
                    </Column>
                    <Column $height={291} $inset={15.9}>
                      <ColumnHead $indent={14}>Complete<Dots drop={5} /></ColumnHead>
                      <Stack>
                        <TaskCard />
                        <TaskCard />
                      </Stack>
                    </Column>
                  </Columns>
                </Workspace>
              </BoardBody>
            </Board>
          </Hero>
        </Page>
        <Scrollbar>
          <svg width="15" height="15" viewBox="0 0 15 15"><path d="M4 10L7.5 6L11 10Z" fill="#a3a3a3" /></svg>
          <Thumb />
          <svg width="15" height="15" viewBox="0 0 15 15"><path d="M4 5L7.5 9L11 5Z" fill="#505050" /></svg>
        </Scrollbar>
      </Viewport>

      <Dock>
        <DockItem $active><BraveLion size={33} /><Running><i /></Running></DockItem>
        <DockItem><Thunderbird /></DockItem>
        <DockItem><FilesIcon /></DockItem>
        <DockItem><NotionCube /></DockItem>
        <DockItem><IdeFrame $kind="clion"><IdeText>CL</IdeText></IdeFrame></DockItem>
        <DockItem><IdeFrame $kind="idea"><IdeText>IJ</IdeText></IdeFrame></DockItem>
        <DockItem><RoundLogo $bg="#fff" $size={30}><SlackMark size={20} /></RoundLogo><Running><i /></Running></DockItem>
        <DockItem><RoundLogo $bg="#191414" $size={30} $fg="#1ed760"><FaSpotify size={30} /></RoundLogo></DockItem>
        <DockItem><OneNote><NoteTile>N</NoteTile></OneNote></DockItem>
        <DockItem><TerminalTile>&gt;_</TerminalTile><Running><i /><i /></Running></DockItem>
        <DockItem><VsCode /><Running><i /></Running></DockItem>
        <DockItem><RoundLogo $bg="#5865f2" $size={34}><FaDiscord size={22} /></RoundLogo><Running><i /></Running></DockItem>
        <DockLine />
        <DockItem><Cone size={32} /><Running><i /></Running></DockItem>
        <DockItem><TrashIcon><FaRecycle size={14} /></TrashIcon></DockItem>
        <DockSpacer />
        <svg width="32" height="24" viewBox="0 0 32 24" fill="#f0e6ea">
          {[4, 12, 20].map((y) => [8, 16, 24].map((x) => <circle key={`${x}-${y}`} cx={x} cy={y} r="2.3" />))}
        </svg>
      </Dock>
    </Screen>
  );
}
